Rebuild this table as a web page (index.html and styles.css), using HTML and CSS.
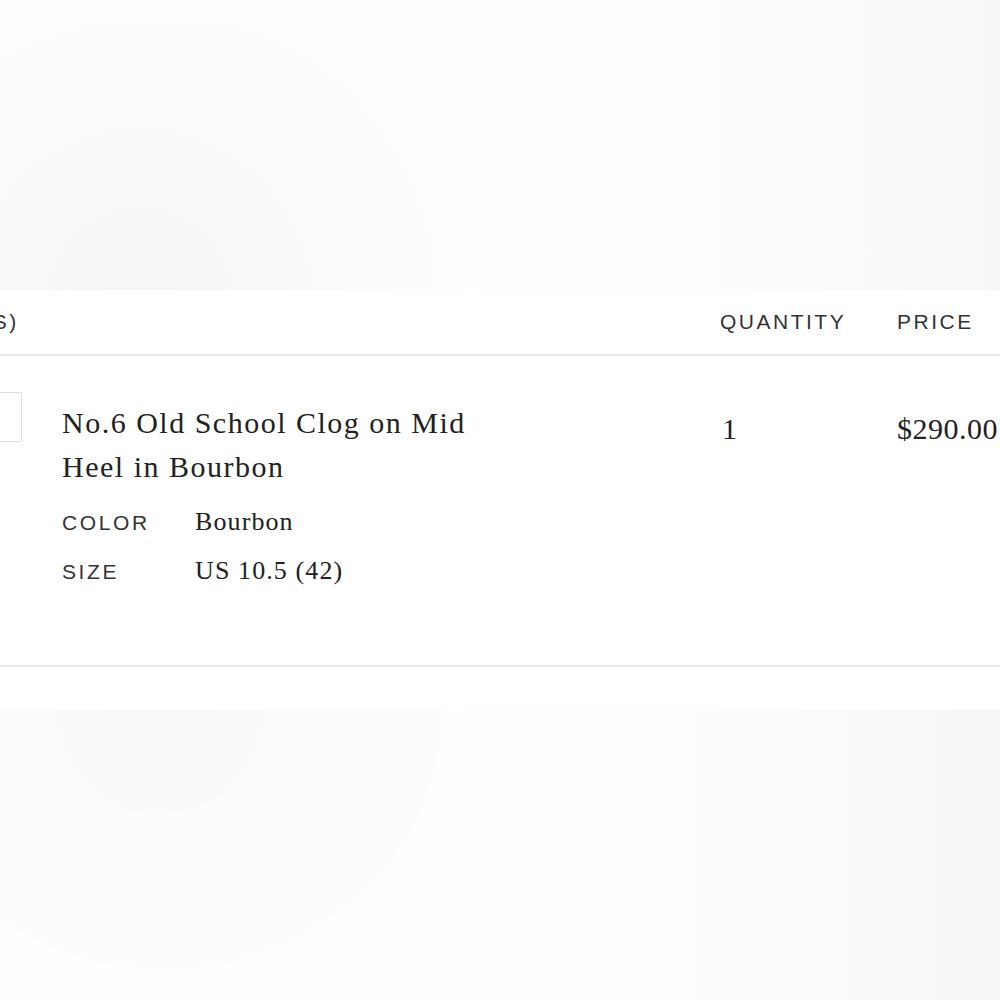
FILE: index.html
```html
<!DOCTYPE html>
<html lang="en">
<head>
<meta charset="UTF-8">
<title>Cart</title>
<link rel="stylesheet" href="styles.css">
</head>
<body>
	<div class="backdrop backdrop-top"></div>
	<div class="cart">
		<div class="cart-head">
			<div class="col-item">ITEM(S)</div>
			<div class="col-qty">QUANTITY</div>
			<div class="col-price">PRICE</div>
		</div>
		<div class="cart-row">
			<div class="col-item item">
				<div class="thumb"></div>
				<div class="details">
					<div class="title">No.6 Old School Clog on Mid<br>Heel in Bourbon</div>
					<div class="attr">
						<span class="attr-label">COLOR</span>
						<span class="attr-value">Bourbon</span>
					</div>
					<div class="attr">
						<span class="attr-label">SIZE</span>
						<span class="attr-value">US 10.5 (42)</span>
					</div>
				</div>
			</div>
			<div class="col-qty qty">1</div>
			<div class="col-price price">$290.00</div>
		</div>
	</div>
	<div class="backdrop backdrop-bottom"></div>
</body>
</html>
```

FILE: styles.css
```css
body {
	margin: 0;
	background-color: #fff;
	color: #222;
	overflow: hidden;
}
.backdrop {
	height: 290px;
}
.backdrop-top {
	background:
		radial-gradient(circle at 140px 300px, #f6f6f8 0, #f9f9fa 120px, #fcfcfc 250px, rgba(255,255,255,0) 330px),
		linear-gradient(to right, #fefefe 0, #fdfdfd 70%, #f8f8f8 100%);
}
.backdrop-bottom {
	margin-top: 43px;
	background:
		radial-gradient(ellipse 110px 110px at 160px 0, #f9f9f9 0, #fafafa 100px, rgba(255,255,255,0) 110px),
		radial-gradient(ellipse 300px 280px at 165px 0, #fbfbfb 0, #fcfcfc 270px, rgba(255,255,255,0) 280px),
		linear-gradient(to right, #fefefe 0, #fdfdfd 68%, #fafafa 86%, #f7f7f7 100%);
}
.cart {
	margin-left: -77px;
	background-color: #fff;
}
.cart-head,
.cart-row {
	display: grid;
	grid-template-columns: 797px 177px 1fr;
}
.cart-head {
	height: 64px;
	align-items: center;
	border-bottom: 2px solid #e8e8e8;
	font-family: "Liberation Sans", Arial, sans-serif;
	font-size: 21px;
	letter-spacing: 2.5px;
	color: #333;
}
.cart-row {
	height: 309px;
	border-bottom: 2px solid #e8e8e8;
	align-items: start;
}
.item {
	display: flex;
	padding: 36px 0 0 49px;
}
.thumb {
	width: 48px;
	height: 48px;
	border: 1px solid #e2e2e2;
	flex-shrink: 0;
}
.details {
	margin-left: 40px;
	padding-top: 9px;
}
.title {
	font-family: "Liberation Serif", "Times New Roman", serif;
	font-size: 30px;
	line-height: 44px;
	letter-spacing: 1.5px;
	margin-bottom: 8px;
}
.attr {
	display: flex;
	align-items: baseline;
	height: 49px;
	line-height: 49px;
}
.attr-label {
	width: 133px;
	font-family: "Liberation Sans", Arial, sans-serif;
	font-size: 21px;
	letter-spacing: 2.6px;
	color: #333;
}
.attr-value {
	font-family: "Liberation Serif", "Times New Roman", serif;
	font-size: 26px;
	letter-spacing: 1.1px;
}
.qty,
.price {
	font-family: "Liberation Serif", "Times New Roman", serif;
	font-size: 30px;
	line-height: 44px;
	padding-top: 51px;
	letter-spacing: 0.5px;
}
.qty {
	padding-left: 2px;
}
```
